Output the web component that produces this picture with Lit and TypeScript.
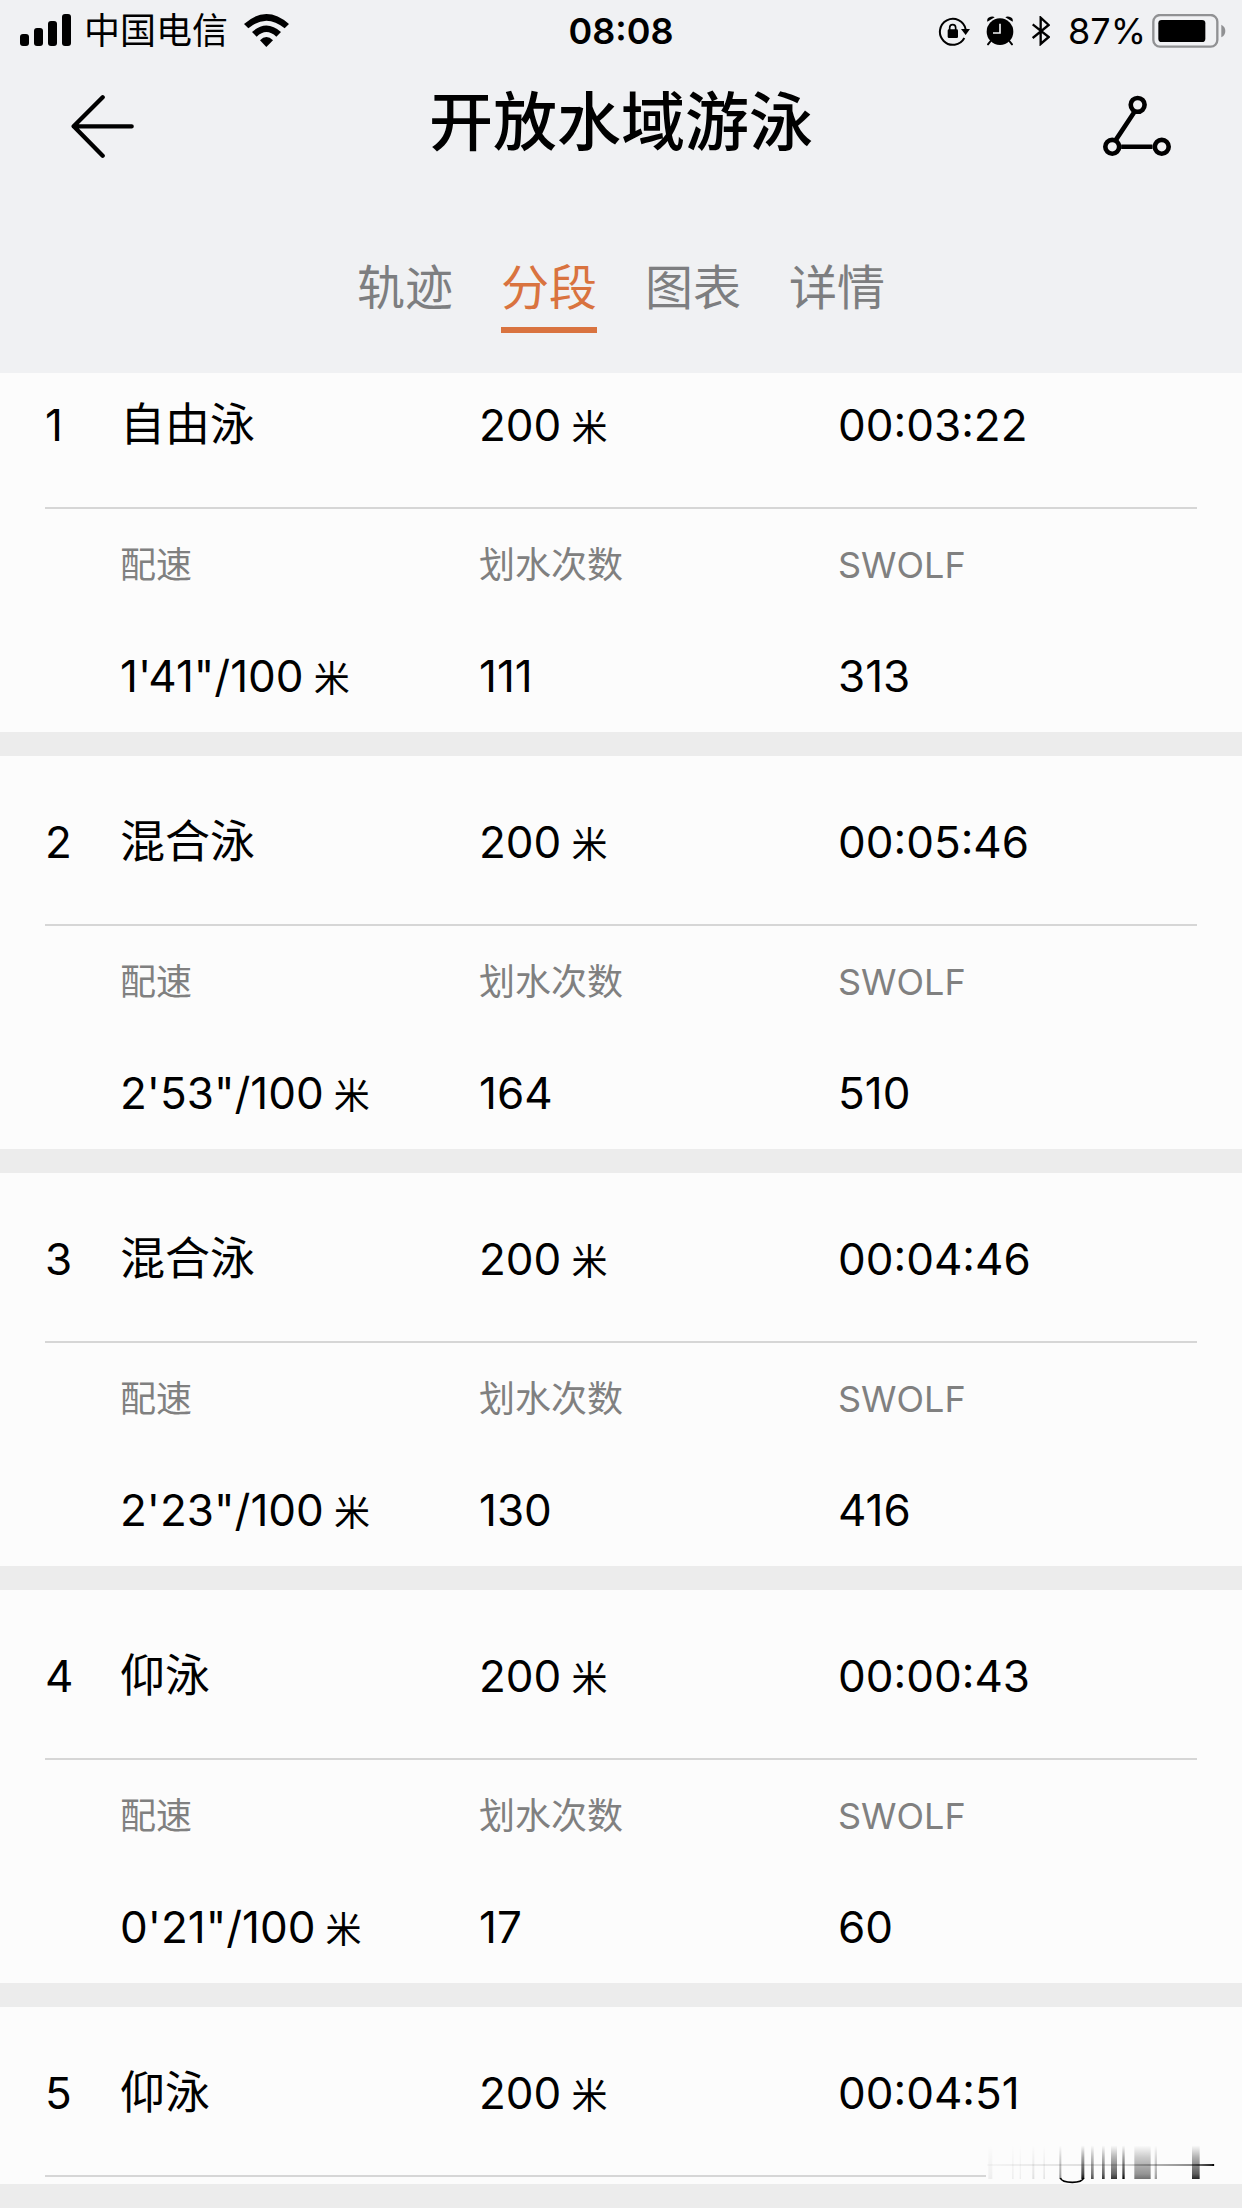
import { LitElement, html, css, svg, nothing } from "lit";
import { customElement, property, state } from "lit/decorators.js";
import { classMap } from "lit/directives/class-map.js";

interface Segment {
  stroke: string;
  distance: string;
  time: string;
  pace?: string;
  strokes?: string;
  swolf?: string;
}

const SEGMENTS: Segment[] = [
  { stroke: "自由泳", distance: "200", time: "00:03:22", pace: `1'41"/100`, strokes: "111", swolf: "313" },
  { stroke: "混合泳", distance: "200", time: "00:05:46", pace: `2'53"/100`, strokes: "164", swolf: "510" },
  { stroke: "混合泳", distance: "200", time: "00:04:46", pace: `2'23"/100`, strokes: "130", swolf: "416" },
  { stroke: "仰泳", distance: "200", time: "00:00:43", pace: `0'21"/100`, strokes: "17", swolf: "60" },
  { stroke: "仰泳", distance: "200", time: "00:04:51" },
];

const TABS = ["轨迹", "分段", "图表", "详情"];

@customElement("status-bar")
class StatusBar extends LitElement {
  static styles = css`
    :host {
      display: grid;
      grid-template-columns: 1fr auto 1fr;
      align-items: center;
      height: 62px;
      padding: 0 16px;
      font-size: 36px;
      line-height: 40px;
    }
    svg {
      display: block;
      flex: none;
    }
    .left,
    .right {
      display: flex;
      align-items: center;
    }
    .left {
      padding-left: 4px;
    }
    .carrier {
      margin: 0 16px 0 12px;
    }
    .clock {
      font-weight: 600;
    }
    .right {
      justify-content: flex-end;
    }
    .lock {
      margin-right: 16px;
    }
    .alarm {
      margin-right: 18px;
    }
    .bluetooth {
      margin-right: 18px;
    }
    .battery {
      margin-left: 6px;
    }
  `;

  render() {
    return html`
      <div class="left">
        <svg width="52" height="34" viewBox="0 0 52 34" aria-hidden="true">
          <rect x="0" y="20" width="9" height="12" rx="3" />
          <rect x="14" y="14" width="9" height="18" rx="3" />
          <rect x="28" y="7" width="9" height="25" rx="3" />
          <rect x="42" y="0" width="9" height="32" rx="3" />
        </svg>
        <span class="carrier">中国电信</span>
        <svg width="45" height="34" viewBox="730 39 135 102" aria-hidden="true">
          <path d="M730 69Q797 9 865 69L852 82Q797 36 743 82Z" />
          <path d="M754 93Q797 54 841 93L827 107Q797 79 768 107Z" />
          <path d="M778 118Q797 98 817 118L797 138Z" />
        </svg>
      </div>
      <time class="clock">08:08</time>
      <div class="right">
        <svg class="lock" width="32" height="30" viewBox="118 50 96 90" aria-hidden="true">
          <path d="M197 116A39 39 0 1 1 201 90" fill="none" stroke="#000" stroke-width="6" />
          <path d="M187 89H214L201 107Z" />
          <rect x="147" y="90" width="31" height="26" rx="4" />
          <path d="M153 92V85A9 9 0 0 1 171 85V92" fill="none" stroke="#000" stroke-width="5" />
        </svg>
        <svg class="alarm" width="28" height="30" viewBox="262 47 84 90" aria-hidden="true">
          <circle cx="304" cy="94" r="40" />
          <path d="M266 64Q263 52 276 49Q284 47 288 51ZM342 64Q345 52 332 49Q324 47 320 51Z" />
          <path d="M276 122L268 132M332 122L340 132" stroke="#000" stroke-width="6" stroke-linecap="round" />
          <path d="M304 70V98H283" fill="none" stroke="#f0f1f3" stroke-width="5" />
        </svg>
        <svg class="bluetooth" width="18" height="30" viewBox="401 49 54 90" aria-hidden="true">
          <path d="M403 74L451 112L427 133V54L451 76L403 115" fill="none" stroke="#000" stroke-width="7" />
        </svg>
        <span>87%</span>
        <svg class="battery" width="74" height="34" viewBox="758 39 222 102" aria-hidden="true">
          <rect x="762" y="42" width="192" height="95" rx="20" fill="none" stroke="#909193" stroke-width="7" />
          <rect x="777" y="57" width="141" height="66" rx="10" />
          <path d="M966 71Q978 77 978 90Q978 103 966 109Z" fill="#909193" />
        </svg>
      </div>
    `;
  }
}

@customElement("segment-card")
class SegmentCard extends LitElement {
  @property({ type: Number }) number = 1;
  @property({ attribute: false }) segment!: Segment;

  static styles = css`
    :host {
      display: block;
      padding: 0 45px;
      background: #fcfcfc;
      font-size: 44px;
    }
    .head,
    .body {
      display: grid;
      grid-template-columns: 75px repeat(3, 1fr);
    }
    .head {
      padding-top: 4px;
      border-bottom: 2px solid #d6d6d6;
      line-height: 164px;
    }
    .name {
      margin: 0;
      font-size: 45px;
      font-weight: 400;
    }
    .body {
      margin: 0;
    }
    .metric:first-child {
      grid-column: 2;
    }
    .label {
      color: #808080;
      font-size: 36px;
      line-height: 112px;
    }
    .value {
      margin: 0;
      line-height: 111px;
    }
    .unit {
      font-size: 36px;
      line-height: 1;
    }
  `;

  render() {
    const s = this.segment;
    return html`
      <div class="head">
        <span>${this.number}</span>
        <h2 class="name">${s.stroke}</h2>
        <span>${s.distance}<span class="unit"> 米</span></span>
        <time>${s.time}</time>
      </div>
      ${s.pace
        ? html`<dl class="body">
            <div class="metric">
              <dt class="label">配速</dt>
              <dd class="value">${s.pace}<span class="unit"> 米</span></dd>
            </div>
            <div class="metric">
              <dt class="label">划水次数</dt>
              <dd class="value">${s.strokes}</dd>
            </div>
            <div class="metric">
              <dt class="label">SWOLF</dt>
              <dd class="value">${s.swolf}</dd>
            </div>
          </dl>`
        : nothing}
    `;
  }
}

/* Vertical streaks of the smudge: x, width, opacity at the foot. */
const STREAKS: [number, number, number][] = [
  [145, 12, 0.06],
  [216, 5, 0.06],
  [239, 4, 0.06],
  [277, 6, 0.12],
  [310, 5, 0.1],
  [358, 6, 0.45],
  [424, 9, 0.95],
  [453, 8, 0.7],
  [486, 8, 0.8],
  [513, 18, 0.8],
  [547, 7, 1],
  [583, 49, 0.55],
  [644, 7, 0.4],
  [756, 23, 0.85],
];

@customElement("app-root")
class AppRoot extends LitElement {
  @state() private tab = "分段";

  static styles = css`
    :host {
      display: flex;
      flex-direction: column;
      height: 100vh;
      overflow: hidden;
      background: #ececec;
      color: #000;
      font-family: Inter, "Noto Sans CJK SC", sans-serif;
    }
    .top {
      flex: none;
      background: #f0f1f3;
    }
    .nav {
      display: grid;
      grid-template-columns: 1fr auto 1fr;
      align-items: center;
      height: 128px;
      padding: 0 71px;
    }
    .icon-button {
      display: block;
      padding: 0;
      border: 0;
      background: none;
      cursor: pointer;
      justify-self: start;
    }
    .share {
      justify-self: end;
    }
    .icon-button svg {
      display: block;
    }
    .title {
      margin: 0;
      padding-bottom: 8px;
      font-size: 64px;
      line-height: 80px;
      font-weight: 500;
    }
    .tabs {
      display: flex;
      justify-content: center;
      gap: 48px;
      height: 183px;
      padding-top: 47px;
      box-sizing: border-box;
    }
    .tab {
      height: 96px;
      padding: 12px 0 0;
      border: 0;
      border-bottom: 6px solid transparent;
      background: none;
      color: #7d7e80;
      font: inherit;
      font-size: 48px;
      line-height: 72px;
      cursor: pointer;
    }
    .tab.active {
      border-color: #d9733f;
      color: #d9733f;
    }
    .list {
      position: relative;
      flex: 1;
      min-height: 0;
      overflow: hidden;
      margin-bottom: 24px;
      background: #fcfcfc;
    }
    .cards {
      display: flex;
      flex-direction: column;
      gap: 24px;
      margin-top: -34px;
      background: #ececec;
    }
    .smudge {
      position: absolute;
      right: 26px;
      bottom: 0;
    }
  `;

  render() {
    return html`
      <header class="top">
        <status-bar></status-bar>
        <div class="nav">
          <button class="icon-button" aria-label="返回">
            <svg width="63" height="63" viewBox="213 285 189 189" aria-hidden="true">
              <path
                d="M308 292L221 379L308 467M221 379H395"
                fill="none"
                stroke="#000"
                stroke-width="13"
                stroke-linecap="round"
                stroke-linejoin="round"
              />
            </svg>
          </button>
          <h1 class="title">开放水域游泳</h1>
          <button class="icon-button share" aria-label="分享">
            <svg width="68" height="62" viewBox="608 284 206 186" aria-hidden="true">
              <g fill="none" stroke="#000" stroke-width="14">
                <path d="M704 333L647 419M663 440H758" />
                <circle cx="713" cy="313" r="21" />
                <circle cx="636" cy="440" r="21" />
                <circle cx="786" cy="440" r="21" />
              </g>
            </svg>
          </button>
        </div>
        <nav class="tabs" role="tablist">
          ${TABS.map(
            (t) => html`<button
              role="tab"
              aria-selected=${t === this.tab ? "true" : "false"}
              class=${classMap({ tab: true, active: t === this.tab })}
              @click=${() => (this.tab = t)}
            >
              ${t}
            </button>`
          )}
        </nav>
      </header>
      <main class="list">
        <div class="cards">
          ${SEGMENTS.map((s, i) => html`<segment-card .number=${i + 1} .segment=${s}></segment-card>`)}
        </div>
        <svg class="smudge" width="232" height="42" viewBox="132 306 696 126" aria-hidden="true">
          <defs>
            <linearGradient id="down" x1="0" y1="0" x2="0" y2="1">
              <stop offset="0" stop-opacity="0" />
              <stop offset="0.35" stop-opacity="0.35" />
              <stop offset="0.85" stop-opacity="0.75" />
              <stop offset="1" stop-opacity="1" />
            </linearGradient>
            <linearGradient id="across" x1="0" y1="0" x2="1" y2="0">
              <stop offset="0" stop-opacity="0.03" />
              <stop offset="0.6" stop-opacity="0.15" />
              <stop offset="0.9" stop-opacity="0.45" />
              <stop offset="1" stop-opacity="0.9" />
            </linearGradient>
          </defs>
          <rect x="138" y="306" width="690" height="126" fill="#fcfcfc" />
          ${STREAKS.map(
            ([x, w, o]) => svg`<rect x=${x} y="316" width=${w} height="101" fill="url(#down)" opacity=${o} />`
          )}
          <rect x="142" y="372" width="680" height="6" fill="url(#across)" />
          <circle cx="820" cy="375" r="3" />
          <path d="M361 414Q366 427 397 427Q426 427 431 414" fill="none" stroke="#000" stroke-width="5" />
        </svg>
      </main>
    `;
  }
}
